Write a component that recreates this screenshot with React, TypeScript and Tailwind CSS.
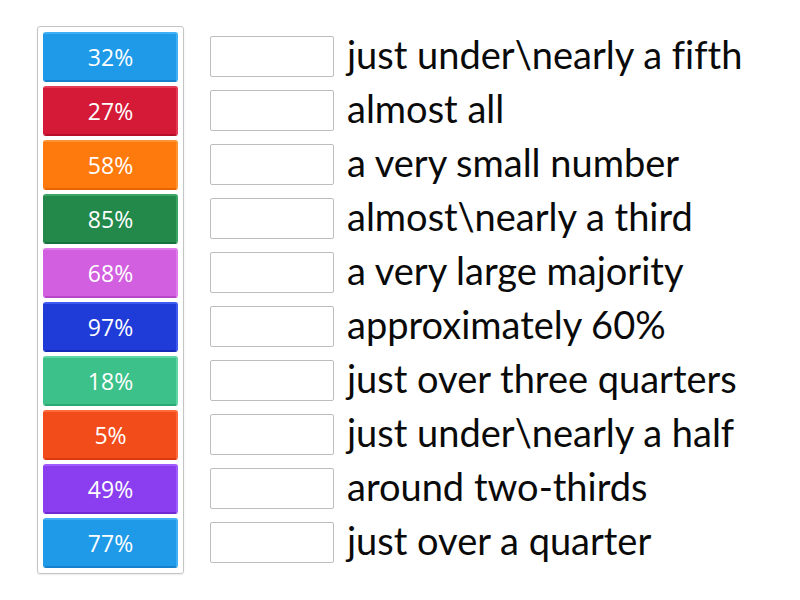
import React from 'react';

type Tile = { label: string; bg: string };

const tiles: Tile[] = [
  { label: '32%', bg: 'bg-[#1e9ae8] border-t-[#3fb0f5] border-r-[#3fb0f5] border-b-[#1580cc] border-l-[#1e9ae8]' },
  { label: '27%', bg: 'bg-[#d41a37] border-t-[#e53a55] border-r-[#e53a55] border-b-[#b70f2a] border-l-[#d41a37]' },
  { label: '58%', bg: 'bg-[#ff7a0c] border-t-[#ff9432] border-r-[#ff9432] border-b-[#e86400] border-l-[#ff7a0c]' },
  { label: '85%', bg: 'bg-[#22894b] border-t-[#3ca566] border-r-[#3ca566] border-b-[#17703b] border-l-[#22894b]' },
  { label: '68%', bg: 'bg-[#d25ee0] border-t-[#e07bec] border-r-[#e07bec] border-b-[#b945c8] border-l-[#d25ee0]' },
  { label: '97%', bg: 'bg-[#1f3bd8] border-t-[#3f5aee] border-r-[#3f5aee] border-b-[#1529b8] border-l-[#1f3bd8]' },
  { label: '18%', bg: 'bg-[#3cc18a] border-t-[#5fd6a3] border-r-[#5fd6a3] border-b-[#2aa772] border-l-[#3cc18a]' },
  { label: '5%', bg: 'bg-[#f24c1b] border-t-[#ff6a3a] border-r-[#ff6a3a] border-b-[#d83a0c] border-l-[#f24c1b]' },
  { label: '49%', bg: 'bg-[#8a3ef0] border-t-[#a05cff] border-r-[#a05cff] border-b-[#7028d4] border-l-[#8a3ef0]' },
  { label: '77%', bg: 'bg-[#1e9ae8] border-t-[#3fb0f5] border-r-[#3fb0f5] border-b-[#1580cc] border-l-[#1e9ae8]' },
];

const phrases = [
  'just under\\nearly a fifth',
  'almost all',
  'a very small number',
  'almost\\nearly a third',
  'a very large majority',
  'approximately 60%',
  'just over three quarters',
  'just under\\nearly a half',
  'around two-thirds',
  'just over a quarter',
];

const App: React.FC = () => {
  return (
    <div className="w-[800px] h-[600px] bg-white flex items-start" style={{ fontFamily: 'Lato, sans-serif' }}>
      {/* answer tiles */}
      <div className="ml-[37px] mt-[26px] w-[147px] border border-[#c4c4c4] rounded-[3px] p-[5px] flex flex-col gap-[4px] shadow-[0_1px_2px_rgba(0,0,0,0.08)]">
        {tiles.map((t) => (
          <div
            key={t.label}
            className={`h-[50px] rounded-[3px] border-2 flex items-center justify-center text-white text-[23px] ${t.bg}`}
            style={{ fontFamily: '"Open Sans", sans-serif' }}
          >
            {t.label}
          </div>
        ))}
      </div>

      {/* drop boxes + phrases */}
      <div className="ml-[26px] mt-[29px] flex flex-col">
        {phrases.map((p) => (
          <div key={p} className="h-[54px] flex items-center">
            <div className="w-[124px] h-[41px] border border-[#bdbdbd] rounded-[2px] bg-white" />
            <span className="ml-[13px] pb-[5px] text-[38px] leading-none text-[#0a0a0a] [font-variant-ligatures:none]">{p}</span>
          </div>
        ))}
      </div>
    </div>
  );
};

export default App;
